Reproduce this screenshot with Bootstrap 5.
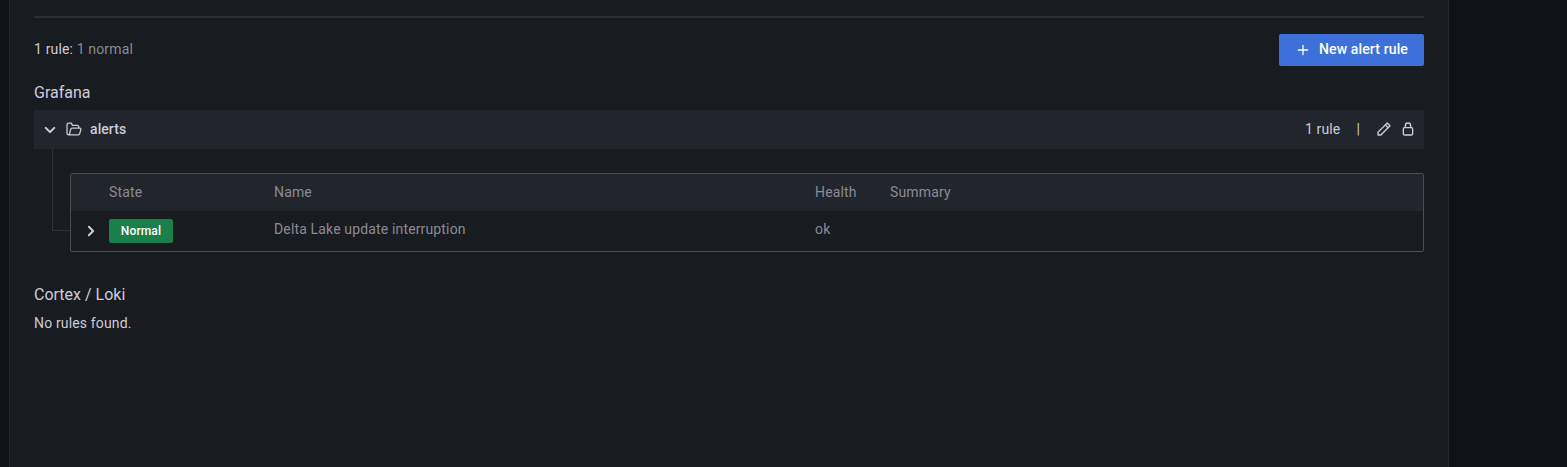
<!DOCTYPE html>
<html lang="en" data-bs-theme="dark">
<head>
<meta charset="utf-8">
<title>Alert rules</title>
<link href="https://cdn.jsdelivr.net/npm/bootstrap@5.3.0/dist/css/bootstrap.min.css" rel="stylesheet">
<style>
body{background:#111217;color:#ccccdc;font:400 14px/22px Roboto,sans-serif;letter-spacing:.15px;height:467px;overflow:hidden}
.page-panel{margin-left:9px;width:1440px;height:467px;background:#181b1f;border:solid #25272c;border-width:0 1px;padding:16px 24px 0}
.rule-line{height:2px;background:#2c2f34;margin-bottom:16px}
.dim{color:#8a8a96}
.btn-new{--bs-btn-bg:#3d71d9;--bs-btn-color:#fff;--bs-btn-border-width:0;--bs-btn-border-radius:2px;--bs-btn-padding-x:16px;--bs-btn-padding-y:0;--bs-btn-font-size:14px;--bs-btn-font-weight:500;--bs-btn-line-height:30px;height:32px;width:145px;letter-spacing:.13px}
h5{font-size:16px;line-height:22px;font-weight:400;margin:0;color:#ccccdc;letter-spacing:0}
svg{display:block;fill:currentColor;flex:none}
.folder-bar{height:39px;background:#22252b;padding:0 8px 2px 4px}
.folder-bar h6{font-size:14px;line-height:22px;font-weight:500;margin:0 0 0 8px;letter-spacing:.08px;color:#ccccdc}
.branch{width:18px;height:82px;margin-left:18px;border:solid #2e3136;border-width:0 0 1px 1px}
.rules-box{margin-top:24px;height:79px;border:1px solid #4b4d54;border-radius:2px}
.rules-grid{display:grid;grid-template-columns:38px 165px 541px 75px 1fr}
.rules-head{height:37px;background:#22252b;line-height:36px}
.rules-row{height:40px;line-height:36px}
.state-tag{width:64px;height:24px;margin-top:8px;background:#1a7f4b;color:#fff;border-radius:2px;font-size:12px;line-height:24px;font-weight:500;letter-spacing:.13px}
</style>
</head>
<body>
<main class="page-panel">
  <div class="rule-line"></div>
  <div class="d-flex justify-content-between">
    <div style="padding-top:4px">1 rule: <span class="dim">1 normal</span></div>
    <a class="btn btn-new d-flex" href="#"><svg class="me-2" style="margin-top:8px" width="16" height="16" viewBox="0 0 24 24"><path d="M19,11H13V5a1,1,0,0,0-2,0v6H5a1,1,0,0,0,0,2h6v6a1,1,0,0,0,2,0V13h6a1,1,0,0,0,0-2Z"/></svg><span class="text-nowrap">New alert rule</span></a>
  </div>
  <h5 style="margin:16px 0 6px">Grafana</h5>
  <div class="folder-bar d-flex align-items-center">
    <svg style="margin-top:2px" width="24" height="24" viewBox="0 0 24 24"><path d="M17,9.17a1,1,0,0,0-1.41,0L12,12.71,8.46,9.17a1,1,0,0,0-1.41,0,1,1,0,0,0,0,1.42l4.24,4.24a1,1,0,0,0,1.42,0L17,10.59A1,1,0,0,0,17,9.17Z"/></svg>
    <svg style="margin-left:4px" width="16" height="16" viewBox="0 0 16 16"><path d="M3.1 13.8H2.5A1.5 1.5 0 0 1 1 12.3V3.7A1.5 1.5 0 0 1 2.500 2.200H5.400L6.500 4.400H11.300A1.500 1.500 0 0 1 12.800 5.900V7.100M3 13.800H12.200A1.500 1.500 0 0 0 13.700 12.700L14.900 8.500A1 1 0 0 0 13.900 7.200H5.900A1.200 1.200 0 0 0 4.800 8.100L3.500 12.800A1.300 1.300 0 0 1 2.400 13.800" fill="none" stroke="currentColor" stroke-width="1.3" stroke-linejoin="round"/></svg>
    <h6>alerts</h6>
    <span class="ms-auto">1 rule</span>
    <span style="margin:0 16px">|</span>
    <svg width="16" height="16" viewBox="0 0 24 24"><path d="M22,7.24a1,1,0,0,0-.29-.71L17.47,2.29A1,1,0,0,0,16.76,2a1,1,0,0,0-.71.29L13.22,5.12h0L2.29,16.05a1,1,0,0,0-.29.71V21a1,1,0,0,0,1,1H7.24A1,1,0,0,0,8,21.71L18.87,10.78h0L21.71,8a1.190,1.190,0,0,0,.22-.33,1,1,0,0,0,0-.24.7.7,0,0,0,0-.14ZM6.83,20H4V17.17l9.93-9.93,2.83,2.83ZM18.17,8.66,15.34,5.83l1.42-1.41,2.82,2.82Z"/></svg>
    <svg class="ms-2" width="16" height="16" viewBox="0 0 24 24"><path d="M17,9V7A5,5,0,0,0,7,7V9a3,3,0,0,0-3,3v7a3,3,0,0,0,3,3H17a3,3,0,0,0,3-3V12A3,3,0,0,0,17,9ZM9,7a3,3,0,0,1,6,0V9H9Zm9,12a1,1,0,0,1-1,1H7a1,1,0,0,1-1-1V12a1,1,0,0,1,1-1H17a1,1,0,0,1,1,1Z"/></svg>
  </div>
  <div class="d-flex">
    <div class="branch"></div>
    <div class="rules-box flex-grow-1 dim">
      <div class="rules-grid rules-head"><span></span><span>State</span><span>Name</span><span>Health</span><span>Summary</span></div>
      <div class="rules-grid rules-row">
        <svg style="margin:8px 0 0 8px;color:#ccccdc" width="24" height="24" viewBox="0 0 24 24"><path d="M14.83,11.29,10.59,7.05a1,1,0,0,0-1.42,0,1,1,0,0,0,0,1.41L12.71,12,9.17,15.54a1,1,0,0,0,0,1.41,1,1,0,0,0,.71.29,1,1,0,0,0,.71-.29l4.24-4.24A1,1,0,0,0,14.83,11.29Z"/></svg>
        <span class="state-tag text-center">Normal</span><span>Delta Lake update interruption</span><span>ok</span><span></span>
      </div>
    </div>
  </div>
  <h5 style="margin:32px 0 6px">Cortex / Loki</h5>
  <div>No rules found.</div>
</main>
<script src="https://cdn.jsdelivr.net/npm/bootstrap@5.3.0/dist/js/bootstrap.bundle.min.js"></script>
</body>
</html>
